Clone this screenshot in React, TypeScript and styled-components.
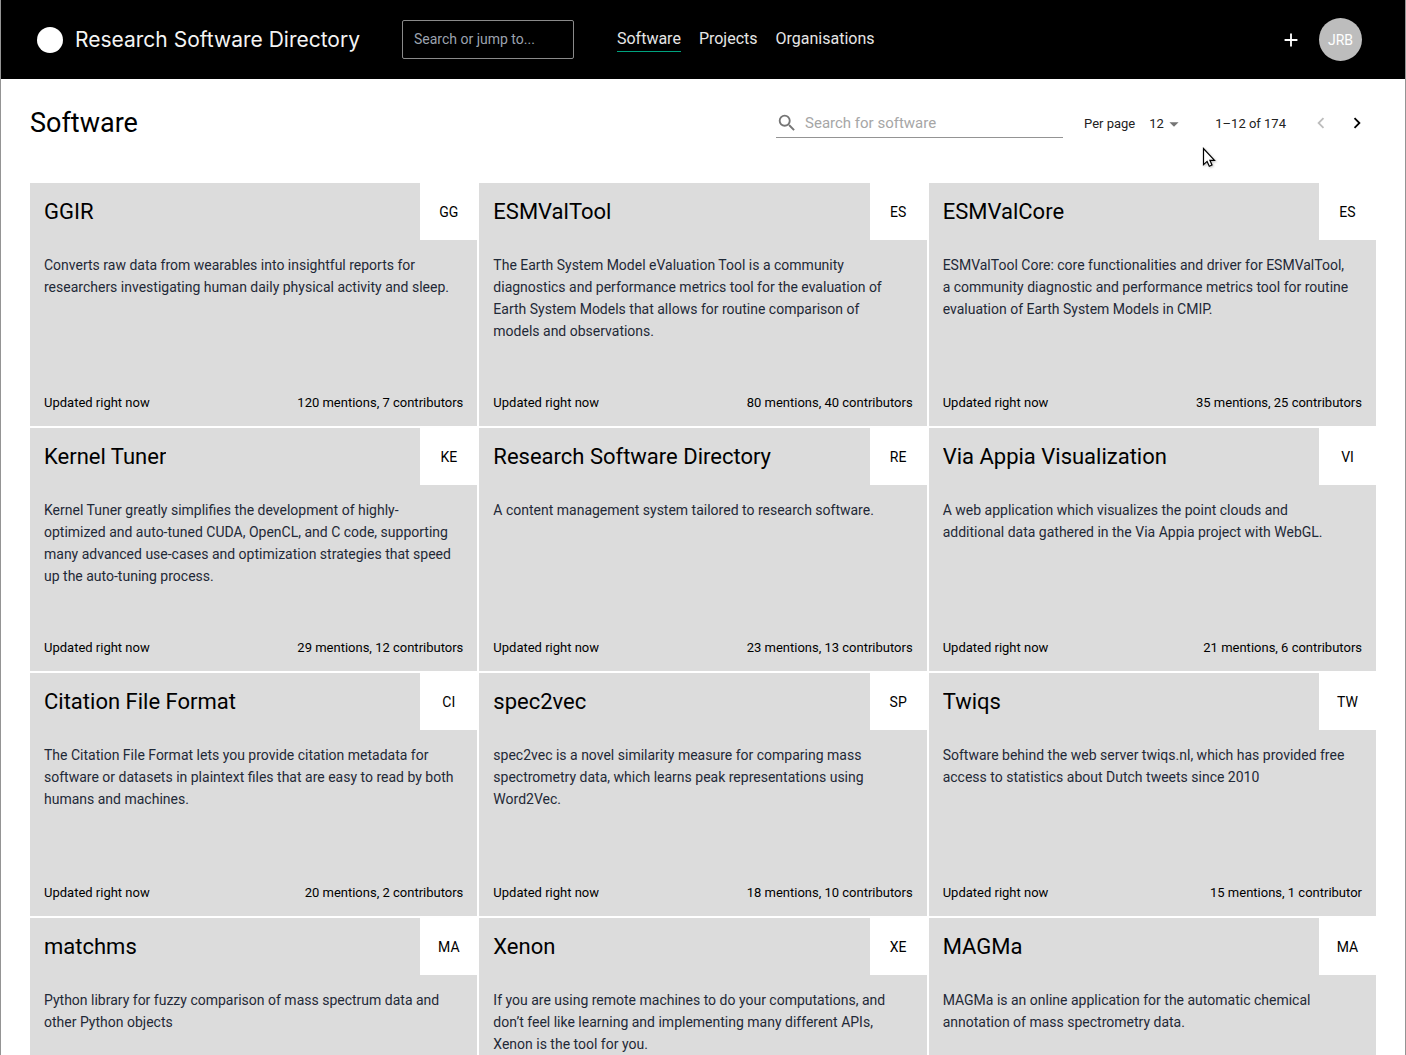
import React from 'react';
import styled, { createGlobalStyle } from 'styled-components';
import { MdAdd, MdArrowDropDown, MdChevronLeft, MdChevronRight, MdSearch } from 'react-icons/md';

const GlobalStyle = createGlobalStyle`
  *, *::before, *::after { box-sizing: border-box; }
  html { scrollbar-width: none; }
  body {
    margin: 0;
    background: #fff;
    color: #000;
    font-family: Roboto, "Liberation Sans", sans-serif;
    font-size: 14px;
  }
  h1, h2, p { margin: 0; font-weight: 400; }
  button, input, select { font: inherit; }
`;

const Page = styled.div`
  min-height: 100vh;
  border: solid #949494;
  border-width: 0 1px;
`;

const Header = styled.header`
  display: flex;
  align-items: center;
  padding: 18px 43px 18px 36px;
  background: #000;
  color: #fff;
`;

const Brand = styled.a`
  display: flex;
  flex: none;
  align-items: center;
  gap: 12px;
  margin-right: 42px;
  color: #f4f4f4;
  font-family: Inter, "Liberation Sans", sans-serif;
  font-size: 21px;
  line-height: 27px;
  text-decoration: none;
  white-space: nowrap;
`;

const BrandDot = styled.span`
  width: 26px;
  height: 26px;
  border-radius: 50%;
  background: #fff;
`;

const GlobalSearch = styled.input`
  width: 172px;
  height: 39px;
  padding: 0 11px 1px;
  border: 1px solid #8a8a8a;
  border-radius: 2px;
  background: transparent;
  color: #fff;
  font-size: 14px;
  &::placeholder { color: #9ca3af; opacity: 1; }
`;

const Nav = styled.nav`
  display: flex;
  flex: 1;
  gap: 18px;
  margin-left: 43px;
`;

const NavLink = styled.a<{ $active?: boolean }>`
  border-bottom: 1px solid ${(p) => (p.$active ? '#00a37f' : 'transparent')};
  color: #e6e6e6;
  font-size: 16px;
  line-height: 24px;
  text-decoration: none;
`;

const IconButton = styled.button<{ $size: number }>`
  display: flex;
  align-items: center;
  justify-content: center;
  width: ${(p) => p.$size}px;
  height: ${(p) => p.$size}px;
  padding: 0;
  border: 0;
  background: none;
  color: inherit;
  &:disabled { color: #bdbdbd; }
`;

const Avatar = styled.button`
  width: 43px;
  height: 43px;
  margin-left: 10px;
  padding: 0;
  border: 0;
  border-radius: 50%;
  background: #bdbdbd;
  color: #fff;
  font-size: 14px;
`;

const Main = styled.main`
  padding: 0 29px;
`;

const Toolbar = styled.div`
  display: flex;
  align-items: center;
  height: 88px;
  margin-bottom: 16px;
  padding-right: 1px;
`;

const PageTitle = styled.h1`
  flex: 1;
  font-size: 27px;
  line-height: 36px;
`;

const SearchField = styled.label`
  display: flex;
  align-items: center;
  width: 287px;
  height: 30px;
  border-bottom: 1px solid #949494;
  color: #757575;
`;

const SearchInput = styled.input`
  flex: 1;
  min-width: 0;
  margin-left: 7px;
  padding: 0;
  border: 0;
  outline: 0;
  background: none;
  color: #222;
  font-size: 15px;
  &::placeholder { color: #a6a6a6; opacity: 1; }
`;

const PerPage = styled.label`
  margin-left: 21px;
  color: #222;
  font-size: 13px;
`;

const SelectBox = styled.div`
  position: relative;
  width: 36px;
  height: 24px;
  margin: 0 30px 0 14px;
  color: #757575;
`;

const SelectInput = styled.select`
  width: 100%;
  height: 24px;
  padding: 0;
  border: 0;
  appearance: none;
  background: none;
  color: #222;
  font-size: 13px;
`;

const SelectArrow = styled(MdArrowDropDown)`
  position: absolute;
  top: 2px;
  right: 0;
  pointer-events: none;
`;

const Range = styled.span`
  margin-right: 17px;
  color: #222;
  font-size: 13px;
`;

const Grid = styled.section`
  display: grid;
  grid-template-columns: repeat(3, minmax(0, 1fr));
  grid-auto-rows: minmax(243px, auto);
  gap: 2px;
`;

const Card = styled.a`
  display: flex;
  flex-direction: column;
  background: #dcdcdc;
  color: #000;
  text-decoration: none;
`;

const CardHead = styled.div`
  display: flex;
  align-items: center;
  justify-content: space-between;
  padding-left: 14px;
`;

const CardTitle = styled.h2`
  overflow: hidden;
  font-size: 22px;
  line-height: 30px;
  text-overflow: ellipsis;
  white-space: nowrap;
`;

const Initials = styled.span`
  display: flex;
  flex: none;
  align-items: center;
  justify-content: center;
  width: 57px;
  height: 57px;
  background: #fff;
  font-size: 14px;
`;

const Description = styled.p`
  flex: 1;
  padding: 14px 14px 0;
  color: #1f2937;
  font-size: 14px;
  line-height: 22px;
  white-space: pre-line;
`;

const CardFoot = styled.div`
  display: flex;
  justify-content: space-between;
  padding: 14px;
  font-size: 13px;
  line-height: 18px;
`;

const Cursor = styled.svg`
  position: absolute;
  top: 147px;
  left: 1202px;
  filter: drop-shadow(1px 1px 1px rgba(0, 0, 0, 0.25));
`;

type Software = { name: string; text: string; mentions: number; contributors: number };

const software: Software[] = [
  { name: 'GGIR', text: 'Converts raw data from wearables into insightful reports for researchers investigating human daily physical activity and sleep.', mentions: 120, contributors: 7 },
  { name: 'ESMValTool', text: 'The Earth System Model eValuation Tool is a community diagnostics and performance metrics tool for the evaluation of Earth System Models that allows for routine comparison of\nmodels and observations.', mentions: 80, contributors: 40 },
  { name: 'ESMValCore', text: 'ESMValTool Core: core functionalities and driver for ESMValTool,\na community diagnostic and performance metrics tool for routine evaluation of Earth System Models in CMIP.', mentions: 35, contributors: 25 },
  { name: 'Kernel Tuner', text: 'Kernel Tuner greatly simplifies the development of highly-\noptimized and auto-tuned CUDA, OpenCL, and C code, supporting\nmany advanced use-cases and optimization strategies that speed\nup the auto-tuning process.', mentions: 29, contributors: 12 },
  { name: 'Research Software Directory', text: 'A content management system tailored to research software.', mentions: 23, contributors: 13 },
  { name: 'Via Appia Visualization', text: 'A web application which visualizes the point clouds and\nadditional data gathered in the Via Appia project with WebGL.', mentions: 21, contributors: 6 },
  { name: 'Citation File Format', text: 'The Citation File Format lets you provide citation metadata for software or datasets in plaintext files that are easy to read by both humans and machines.', mentions: 20, contributors: 2 },
  { name: 'spec2vec', text: 'spec2vec is a novel similarity measure for comparing mass spectrometry data, which learns peak representations using Word2Vec.', mentions: 18, contributors: 10 },
  { name: 'Twiqs', text: 'Software behind the web server twiqs.nl, which has provided free access to statistics about Dutch tweets since 2010', mentions: 15, contributors: 1 },
  { name: 'matchms', text: 'Python library for fuzzy comparison of mass spectrum data and other Python objects', mentions: 14, contributors: 9 },
  { name: 'Xenon', text: 'If you are using remote machines to do your computations, and don’t feel like learning and implementing many different APIs, Xenon is the tool for you.', mentions: 13, contributors: 8 },
  { name: 'MAGMa', text: 'MAGMa is an online application for the automatic chemical annotation of mass spectrometry data.', mentions: 12, contributors: 4 },
];

function SoftwareCard({ item }: { item: Software }) {
  return (
    <Card href="#">
      <CardHead>
        <CardTitle>{item.name}</CardTitle>
        <Initials>{item.name.slice(0, 2).toUpperCase()}</Initials>
      </CardHead>
      <Description>{item.text}</Description>
      <CardFoot>
        <span>Updated right now</span>
        <span>{`${item.mentions} mentions, ${item.contributors} contributor${item.contributors === 1 ? '' : 's'}`}</span>
      </CardFoot>
    </Card>
  );
}

export default function App() {
  return (
    <Page>
      <GlobalStyle />
      <Header>
        <Brand href="#">
          <BrandDot />
          Research Software Directory
        </Brand>
        <GlobalSearch type="search" aria-label="Search or jump to" placeholder="Search or jump to..." />
        <Nav>
          <NavLink href="#" $active>Software</NavLink>
          <NavLink href="#">Projects</NavLink>
          <NavLink href="#">Organisations</NavLink>
        </Nav>
        <IconButton type="button" aria-label="Add" $size={36}>
          <MdAdd size={22} />
        </IconButton>
        <Avatar type="button">JRB</Avatar>
      </Header>
      <Main>
        <Toolbar>
          <PageTitle>Software</PageTitle>
          <SearchField>
            <MdSearch size={22} />
            <SearchInput aria-label="Search for software" placeholder="Search for software" />
          </SearchField>
          <PerPage htmlFor="per-page">Per page</PerPage>
          <SelectBox>
            <SelectInput id="per-page" defaultValue="12">
              <option>12</option>
              <option>24</option>
              <option>48</option>
            </SelectInput>
            <SelectArrow size={22} />
          </SelectBox>
          <Range>1–12 of 174</Range>
          <IconButton type="button" aria-label="Previous page" disabled $size={36}>
            <MdChevronLeft size={22} />
          </IconButton>
          <IconButton type="button" aria-label="Next page" $size={36}>
            <MdChevronRight size={22} />
          </IconButton>
        </Toolbar>
        <Grid>
          {software.map((item) => (
            <SoftwareCard key={item.name} item={item} />
          ))}
        </Grid>
      </Main>
      <Cursor width="14" height="22" viewBox="0 0 14 22" aria-hidden="true">
        <path d="M1.5 1.5v16.2l3.6-3.3 2.2 4.8 2.7-1.2-2.1-4.7h4.6z" fill="#fff" stroke="#000" strokeWidth="1.2" />
      </Cursor>
    </Page>
  );
}
